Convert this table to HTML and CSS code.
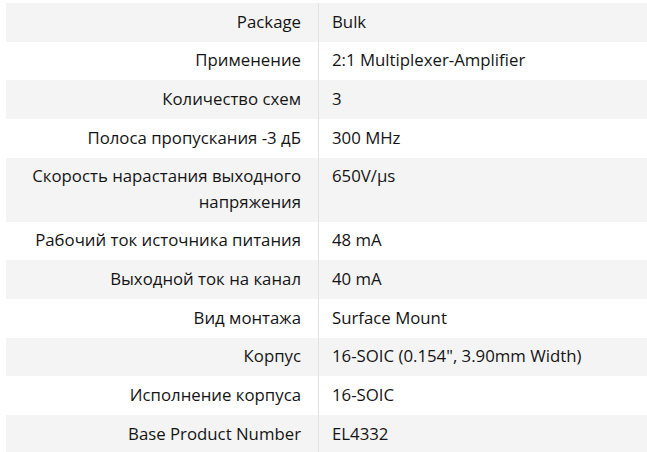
FILE: index.html
```html
<!DOCTYPE html>
<html lang="ru">
<head>
<meta charset="utf-8">
<link rel="stylesheet" href="styles.css">
</head>
<body>
<table class="specs">
  <tbody>
    <tr><th>Package</th><td>Bulk</td></tr>
    <tr><th>Применение</th><td>2:1 Multiplexer-Amplifier</td></tr>
    <tr><th>Количество схем</th><td>3</td></tr>
    <tr><th>Полоса пропускания -3 дБ</th><td>300 MHz</td></tr>
    <tr><th>Скорость нарастания выходного напряжения</th><td>650V/µs</td></tr>
    <tr><th>Рабочий ток источника питания</th><td>48 mA</td></tr>
    <tr><th>Выходной ток на канал</th><td>40 mA</td></tr>
    <tr><th>Вид монтажа</th><td>Surface Mount</td></tr>
    <tr><th>Корпус</th><td>16-SOIC (0.154", 3.90mm Width)</td></tr>
    <tr><th>Исполнение корпуса</th><td>16-SOIC</td></tr>
    <tr><th>Base Product Number</th><td>EL4332</td></tr>
  </tbody>
</table>
</body>
</html>
```

FILE: styles.css
```css
html, body {
  margin: 0;
  padding: 0;
  background: #ffffff;
}

body {
  padding: 3px 0 0 6px;
  font-family: "Open Sans", "Noto Sans", sans-serif;
  font-size: 16.8px;
  color: #141414;
}

.specs {
  width: 100%;
  border-collapse: collapse;
}

.specs tr:nth-child(odd) {
  background: #f4f4f4;
}

.specs th,
.specs td {
  padding: 5.6px 0 7.8px;
  line-height: 25.3px;
  vertical-align: top;
  font-weight: 500;
}

.specs th {
  width: 295px;
  padding-right: 17px;
  text-align: right;
  border-right: 1px solid #e2e2e2;
}

.specs td {
  padding-left: 13px;
  text-align: left;
}
```
